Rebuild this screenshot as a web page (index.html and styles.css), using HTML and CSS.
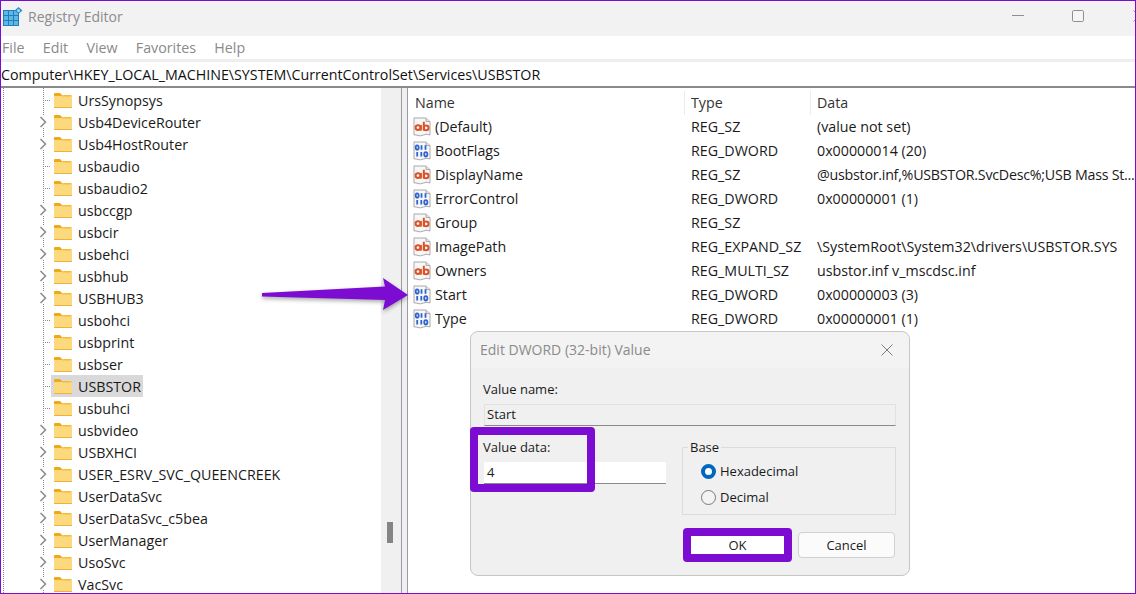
FILE: index.html
```html
<!DOCTYPE html>
<html lang="en">
<head>
<meta charset="utf-8">
<title>Registry Editor</title>
<link rel="stylesheet" href="styles.css">
</head>
<body>
<svg class="defs" width="0" height="0" aria-hidden="true">
  <symbol id="folder" viewBox="0 0 18 15">
    <path d="M0 1Q0 0 1 0H6L8 2V4H0Z" fill="#eda91c"/>
    <path d="M0 3H17Q18 3 18 4V14Q18 15 17 15H1Q0 15 0 14Z" fill="#fcd97c"/>
    <path d="M0 14H18V14.200Q18 15 17 15H1Q0 15 0 14.200Z" fill="#eeb13a"/>
    <path d="M0 3.500H8L8.500 2H17.500V3.500Z" fill="#f4bb3d"/>
  </symbol>
  <symbol id="chev" viewBox="0 0 8 12">
    <path d="M1.500 1L6.500 6L1.500 11" fill="none" stroke="#8a8a8a" stroke-width="1.500"/>
  </symbol>
  <symbol id="page" viewBox="0 0 18 20">
    <path d="M1 1H13L17 4.500V18Q14 16.500 10.500 18T5 18.500T1 18Z" fill="#f7f7f7" stroke="#a9a9a9"/>
    <path d="M13 1V4.500H17" fill="#e4e4e4" stroke="#a9a9a9"/>
  </symbol>
  <symbol id="bin" viewBox="0 0 18 20">
    <use href="#page"/>
    <g fill="none" stroke="#2f62d0" stroke-width="1.800">
      <ellipse cx="4.200" cy="6.500" rx="1.500" ry="2.200"/>
      <path d="M8.500 4.200V8.800M12.500 4.200V8.800"/>
      <path d="M4.200 11V15.600M8.300 11V15.600"/>
      <ellipse cx="12.800" cy="13.300" rx="1.600" ry="2.200"/>
    </g>
  </symbol>
  <symbol id="abi" viewBox="0 0 18 20">
    <use href="#page"/>
    <g fill="none" stroke="#dc5227" stroke-width="2">
      <circle cx="5" cy="10.600" r="2.400"/>
      <path d="M7.900 8V13.600"/>
      <path d="M10.800 4.800V13.600"/>
      <circle cx="13.200" cy="10.900" r="2.300"/>
    </g>
  </symbol>
</svg>

<div class="window">
  <header class="titlebar">
    <svg class="appicon" viewBox="0 0 20 20" width="20" height="20" aria-hidden="true">
      <rect x="0" y="3" width="16" height="16" fill="#1f7fb8"/>
      <g fill="#5fb7e5">
        <rect x="1" y="4" width="4" height="4"/><rect x="6" y="4" width="4" height="4"/><rect x="11" y="4" width="4" height="4"/>
        <rect x="1" y="9" width="4" height="4"/><rect x="6" y="9" width="4" height="4"/><rect x="11" y="9" width="4" height="4"/>
        <rect x="1" y="14" width="4" height="4"/><rect x="6" y="14" width="4" height="4"/><rect x="11" y="14" width="4" height="4"/>
      </g>
      <path d="M15.500 0L19.500 3.500L15.500 7L11.500 3.500Z" fill="#2f8fc9"/>
      <rect x="14.300" y="2.400" width="2.400" height="2.400" fill="#bfe4f7"/>
    </svg>
    <span class="apptitle">Registry Editor</span>
    <span class="winctrl">
      <svg class="ctl-min" width="12" height="2" viewBox="0 0 12 2" aria-hidden="true"><rect width="12" height="1" fill="#8f8f8f"/></svg>
      <svg class="ctl-max" width="12" height="12" viewBox="0 0 12 12" aria-hidden="true"><rect x=".5" y=".5" width="11" height="11" rx="1.200" fill="#f5f5f5" stroke="#8f8f8f"/></svg>
      <svg class="ctl-close" width="12" height="12" viewBox="0 0 12 12" aria-hidden="true"><path d="M.5 .5L11.500 11.500M11.500 .5L.5 11.500" stroke="#8f8f8f" fill="none"/></svg>
    </span>
  </header>
  <nav class="menubar">
    <span>File</span><span>Edit</span><span>View</span><span>Favorites</span><span>Help</span>
  </nav>
  <div class="address">Computer\HKEY_LOCAL_MACHINE\SYSTEM\CurrentControlSet\Services\USBSTOR</div>
  <div class="panes">
    <div class="treepane">
      <ul class="tree">
        <li class="leaf"><i></i><svg class="fold"><use href="#folder"/></svg><span>UrsSynopsys</span></li>
        <li><svg class="chev"><use href="#chev"/></svg><svg class="fold"><use href="#folder"/></svg><span>Usb4DeviceRouter</span></li>
        <li><svg class="chev"><use href="#chev"/></svg><svg class="fold"><use href="#folder"/></svg><span>Usb4HostRouter</span></li>
        <li class="leaf"><i></i><svg class="fold"><use href="#folder"/></svg><span>usbaudio</span></li>
        <li class="leaf"><i></i><svg class="fold"><use href="#folder"/></svg><span>usbaudio2</span></li>
        <li><svg class="chev"><use href="#chev"/></svg><svg class="fold"><use href="#folder"/></svg><span>usbccgp</span></li>
        <li><svg class="chev"><use href="#chev"/></svg><svg class="fold"><use href="#folder"/></svg><span>usbcir</span></li>
        <li><svg class="chev"><use href="#chev"/></svg><svg class="fold"><use href="#folder"/></svg><span>usbehci</span></li>
        <li><svg class="chev"><use href="#chev"/></svg><svg class="fold"><use href="#folder"/></svg><span>usbhub</span></li>
        <li><svg class="chev"><use href="#chev"/></svg><svg class="fold"><use href="#folder"/></svg><span>USBHUB3</span></li>
        <li class="leaf"><i></i><svg class="fold"><use href="#folder"/></svg><span>usbohci</span></li>
        <li class="leaf"><i></i><svg class="fold"><use href="#folder"/></svg><span>usbprint</span></li>
        <li class="leaf"><i></i><svg class="fold"><use href="#folder"/></svg><span>usbser</span></li>
        <li class="leaf selected"><i></i><svg class="fold"><use href="#folder"/></svg><span>USBSTOR</span></li>
        <li class="leaf"><i></i><svg class="fold"><use href="#folder"/></svg><span>usbuhci</span></li>
        <li><svg class="chev"><use href="#chev"/></svg><svg class="fold"><use href="#folder"/></svg><span>usbvideo</span></li>
        <li><svg class="chev"><use href="#chev"/></svg><svg class="fold"><use href="#folder"/></svg><span>USBXHCI</span></li>
        <li><svg class="chev"><use href="#chev"/></svg><svg class="fold"><use href="#folder"/></svg><span>USER_ESRV_SVC_QUEENCREEK</span></li>
        <li><svg class="chev"><use href="#chev"/></svg><svg class="fold"><use href="#folder"/></svg><span>UserDataSvc</span></li>
        <li><svg class="chev"><use href="#chev"/></svg><svg class="fold"><use href="#folder"/></svg><span>UserDataSvc_c5bea</span></li>
        <li><svg class="chev"><use href="#chev"/></svg><svg class="fold"><use href="#folder"/></svg><span>UserManager</span></li>
        <li><svg class="chev"><use href="#chev"/></svg><svg class="fold"><use href="#folder"/></svg><span>UsoSvc</span></li>
        <li><svg class="chev"><use href="#chev"/></svg><svg class="fold"><use href="#folder"/></svg><span>VacSvc</span></li>
      </ul>
      <div class="vscroll"><div class="thumb"></div></div>
    </div>
    <div class="splitter"></div>
    <div class="listpane">
      <div class="row head"><span class="c1">Name</span><span class="c2">Type</span><span class="c3">Data</span></div>
      <div class="row"><span class="c1"><svg class="ri"><use href="#abi"/></svg>(Default)</span><span class="c2">REG_SZ</span><span class="c3">(value not set)</span></div>
      <div class="row"><span class="c1"><svg class="ri"><use href="#bin"/></svg>BootFlags</span><span class="c2">REG_DWORD</span><span class="c3">0x00000014 (20)</span></div>
      <div class="row"><span class="c1"><svg class="ri"><use href="#abi"/></svg>DisplayName</span><span class="c2">REG_SZ</span><span class="c3 tight">@usbstor.inf,%USBSTOR.SvcDesc%;USB Mass St...</span></div>
      <div class="row"><span class="c1"><svg class="ri"><use href="#bin"/></svg>ErrorControl</span><span class="c2">REG_DWORD</span><span class="c3">0x00000001 (1)</span></div>
      <div class="row"><span class="c1"><svg class="ri"><use href="#abi"/></svg>Group</span><span class="c2">REG_SZ</span><span class="c3"></span></div>
      <div class="row"><span class="c1"><svg class="ri"><use href="#abi"/></svg>ImagePath</span><span class="c2">REG_EXPAND_SZ</span><span class="c3">\SystemRoot\System32\drivers\USBSTOR.SYS</span></div>
      <div class="row"><span class="c1"><svg class="ri"><use href="#abi"/></svg>Owners</span><span class="c2">REG_MULTI_SZ</span><span class="c3">usbstor.inf v_mscdsc.inf</span></div>
      <div class="row"><span class="c1"><svg class="ri"><use href="#bin"/></svg>Start</span><span class="c2">REG_DWORD</span><span class="c3">0x00000003 (3)</span></div>
      <div class="row"><span class="c1"><svg class="ri"><use href="#bin"/></svg>Type</span><span class="c2">REG_DWORD</span><span class="c3">0x00000001 (1)</span></div>
    </div>
  </div>
</div>

<svg class="arrow" width="160" height="44" viewBox="0 0 160 44" aria-hidden="true">
  <path d="M2 16L2 19.500L125 23L123 33L148 18L123 1L125 9.500Z" fill="#7d0cd3"/>
</svg>

<section class="dialog">
  <div class="dlg-title">
    <span>Edit DWORD (32-bit) Value</span>
    <svg width="12" height="12" viewBox="0 0 12 12" aria-hidden="true"><path d="M.5 .5L11.500 11.500M11.500 .5L.5 11.500" stroke="#7c7c7c" fill="none"/></svg>
  </div>
  <div class="dlg-body">
    <label class="lbl">Value name:</label>
    <div class="field name">Start</div>
    <div class="dlg-mid">
      <div class="data-col">
        <label class="lbl">Value data:</label>
        <div class="field data">4</div>
      </div>
      <fieldset class="base">
        <legend>Base</legend>
        <div class="radio on"><b></b>Hexadecimal</div>
        <div class="radio"><b></b>Decimal</div>
      </fieldset>
    </div>
    <div class="buttons">
      <button class="btn ok">OK</button>
      <button class="btn cancel">Cancel</button>
    </div>
  </div>
  <div class="mark mark-data"></div>
  <div class="mark mark-ok"></div>
</section>
</body>
</html>
```

FILE: styles.css
```css
* { box-sizing: border-box; }
html, body { margin: 0; height: 100%; }
body {
  position: relative;
  width: 1136px;
  height: 594px;
  overflow: hidden;
  font-family: "Open Sans", "Noto Sans", sans-serif;
  font-size: 14.25px;
  color: #1a1a1a;
  background: #fff;
}
.defs { position: absolute; }
.window {
  width: 1136px;
  height: 594px;
  display: flex;
  flex-direction: column;
  border: 1px solid #7d0cd3;
  overflow: hidden;
}
.titlebar {
  height: 35px;
  flex: none;
  display: flex;
  align-items: center;
  background: #f2f2f2;
  padding: 0 0 5px 2px;
  overflow: hidden;
}
.appicon { flex: none; margin-top: 1px; }
.apptitle { margin-left: 5px; color: #8c8c8c; font-size: 14px; }
.winctrl { margin-left: auto; margin-right: -10px; display: flex; align-items: center; gap: 48px; }
.ctl-min, .ctl-max, .ctl-close { flex: none; }
.ctl-close { margin-left: 1px; }
.menubar {
  height: 23px;
  flex: none;
  display: flex;
  align-items: center;
  gap: 18.25px;
  padding-left: 1px;
  background: #fff;
  color: #8a8a8a;
}
.address {
  flex: none;
  height: 29px;
  line-height: 25px;
  border-top: 3px solid #eeeeee;
  border-bottom: 2px solid #8a8a8a;
  white-space: nowrap;
  color: #111;
  background: #fff;
}
.panes { flex: 1; display: flex; min-height: 0; }
.treepane { width: 400px; flex: none; display: flex; overflow: hidden; }
.tree {
  list-style: none;
  margin: 0;
  padding: 1px 0 0 38px;
  width: 380px;
  height: 506px;
  overflow: hidden;
  background:
    repeating-linear-gradient(to bottom, #8a8a8a 0 1px, transparent 1px 2px) 2px 0 / 1px 100% no-repeat,
    repeating-linear-gradient(to bottom, #8a8a8a 0 1px, transparent 1px 2px) 42px 0 / 1px 100% no-repeat,
    #fff;
}
.tree li {
  height: 22px;
  display: flex;
  align-items: center;
  white-space: nowrap;
  color: #1a1a1a;
}
.tree li .chev { width: 8px; height: 12px; flex: none; margin-right: 7px; background: #fff; }
.tree li i {
  width: 7px;
  flex: none;
  margin: 0 4px 0 4px;
  height: 1px;
  background: repeating-linear-gradient(to right, #8a8a8a 0 1px, transparent 1px 2px);
}
.tree .fold { width: 18px; height: 15px; flex: none; margin-right: 6px; }
.tree li.selected {
  background: linear-gradient(#d9d9d9, #d9d9d9) 12px 0 / 92px 100% no-repeat;
}
.vscroll { width: 20px; flex: none; background: #f0f0f0; position: relative; }
.thumb { position: absolute; left: 6px; top: 434px; width: 6px; height: 21px; background: #858585; }
.splitter {
  width: 7px;
  flex: none;
  background: #f0f0f0;
  border-left: 1px solid #9c9aa5;
  border-right: 1px solid #9c9aa5;
}
.listpane { flex: 1; min-width: 0; background: #fff; padding-top: 2px; overflow: hidden; }
.row { display: flex; height: 24px; align-items: center; white-space: nowrap; }
.row.head { height: 25px; color: #333; }
.row.head span + span { border-left: 1px solid #ececec; padding-left: 6px; }
.c1 { width: 276px; padding-left: 7px; display: flex; align-items: center; flex: none; align-self: stretch; line-height: 24px; }
.row:not(.head) .c1 { padding-left: 5px; }
.c2 { width: 126px; padding-left: 7px; flex: none; line-height: 24px; }
.c3 { flex: 1; padding-left: 7px; line-height: 24px; }
.tight { letter-spacing: -.25px; }
.ri { width: 18px; height: 20px; flex: none; margin-right: 4px; }
.arrow {
  position: absolute;
  left: 260px;
  top: 277px;
  filter: drop-shadow(0 2px 2px rgba(0,0,0,.35));
}
.dialog {
  position: absolute;
  left: 470px;
  top: 331px;
  width: 440px;
  height: 245px;
  background: #f0f0f0;
  border: 1px solid #c6c6c6;
  border-radius: 8px;
  font-size: 13px;
  color: #1a1a1a;
}
.dlg-title {
  height: 36px;
  display: flex;
  align-items: center;
  justify-content: space-between;
  padding: 0 16px 0 9px;
  color: #8a8a8a;
  font-size: 14px;
  background: #f3f3f3;
  border-radius: 8px 8px 0 0;
}
.dlg-title span { padding-bottom: 2px; }
.dlg-body { padding: 12px 13px 0 12px; }
.lbl { display: block; height: 18px; line-height: 18px; }
.field { margin: 6px 0 0 1px; height: 22px; line-height: 19px; padding-left: 2px; }
.field.name { width: 412px; background: #f0f0f0; border: 1px solid #e2e2e2; border-bottom-color: #8a8a8a; }
.field.data { width: 182px; background: #fff; border-bottom: 1px solid #8a8a8a; padding-left: 3px; line-height: 21px; }
.dlg-mid { display: flex; margin-top: 12px; }
.data-col { width: 199px; flex: none; }
.base {
  margin: 2px 0 0 0;
  padding: 4px 0 0 18px;
  width: 214px;
  height: 75px;
  border: 1px solid #dcdcdc;
}
.base legend { padding: 0 2px; margin-left: -13px; line-height: 14px; }
.radio { display: flex; align-items: center; height: 26px; gap: 4px; }
.radio b {
  width: 15px;
  height: 15px;
  border-radius: 50%;
  border: 1px solid #7a7a7a;
  background: #f3f3f3;
  flex: none;
}
.radio.on b { background: #fff; border: 4px solid #0067c0; }
.buttons { display: flex; margin-top: 17px; padding-left: 208px; gap: 14px; }
.btn {
  font: inherit;
  height: 26px;
  border-radius: 4px;
  border: 1px solid #d0d0d0;
  background: #fbfbfb;
  color: #1a1a1a;
  padding: 0;
}
.btn.ok { width: 93px; background: #fff; border-color: #fff; border-radius: 0; }
.btn.cancel { width: 97px; }
.mark {
  position: absolute;
  border: 8px solid #7d0cd3;
  border-radius: 4px;
  pointer-events: none;
}
.mark-data { left: -1px; top: 95px; width: 125px; height: 65px; }
.mark-ok { left: 212px; top: 196px; width: 109px; height: 34px; }
```
